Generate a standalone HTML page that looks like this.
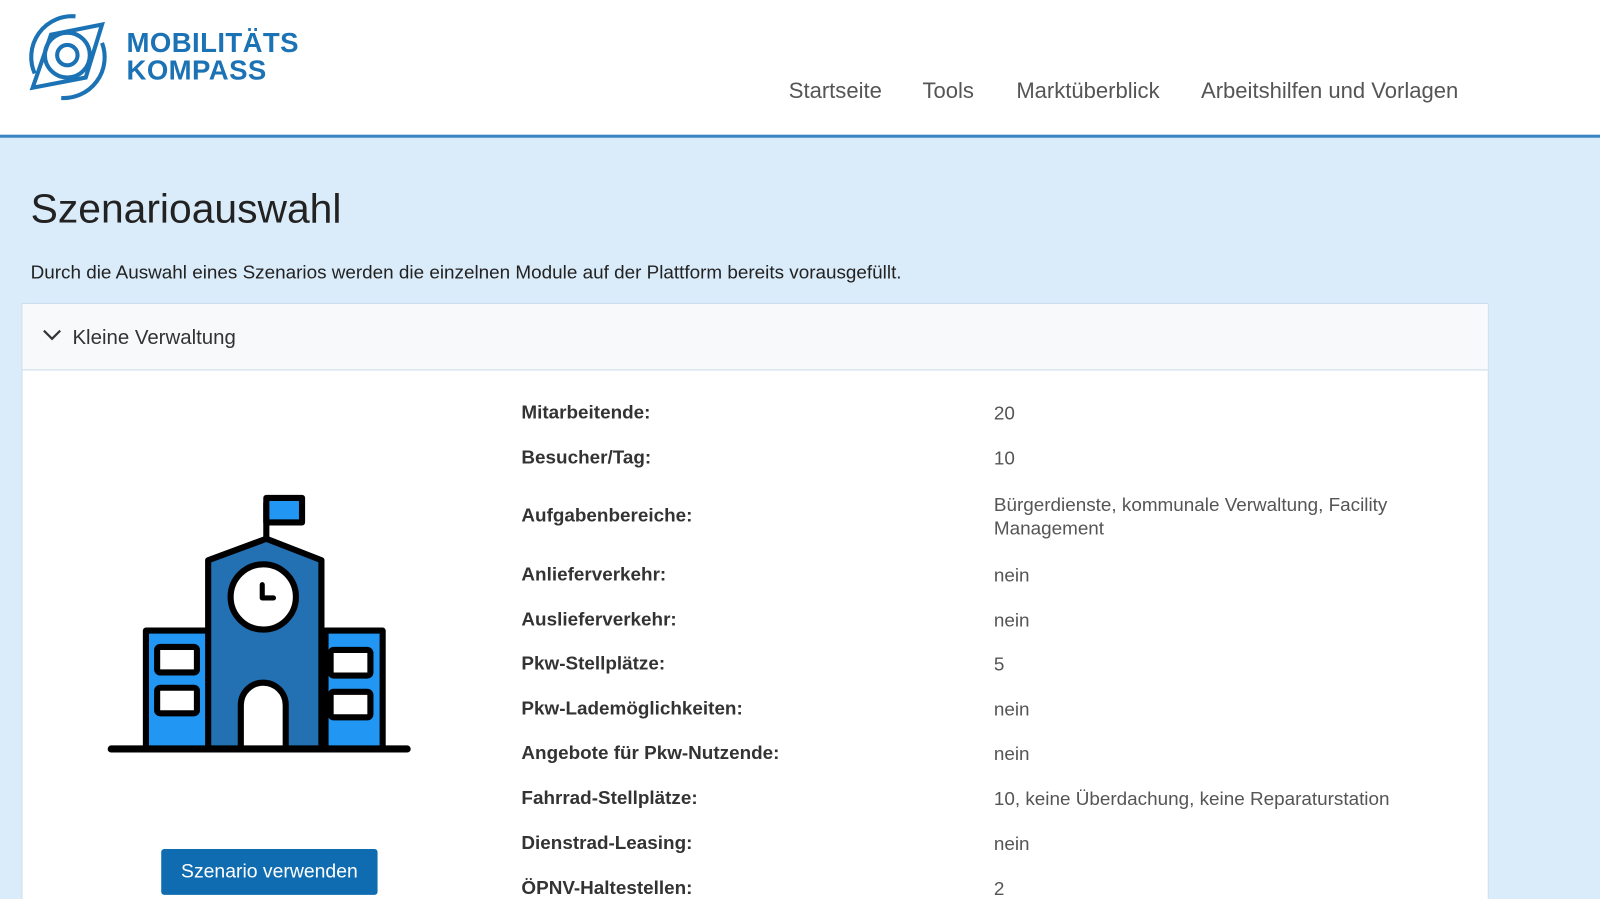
<!DOCTYPE html>
<html style="width:1600px;height:899px;overflow:hidden"><head><meta charset="utf-8"><style>
*{margin:0;padding:0;box-sizing:border-box}
body{width:1600px;height:899px;overflow:hidden;background:#daebf9;font-family:"Liberation Sans",sans-serif;position:relative}
#w{position:absolute;left:0;top:0;width:1568px;height:881px;overflow:hidden;transform:scale(1.0204);transform-origin:0 0}
.hdr{position:absolute;left:0;top:0;width:1568px;height:135px;background:#fff;border-bottom:3px solid #3a84c4}
.logo{position:absolute;left:24px;top:12px}
.lt{position:absolute;left:124px;top:29px;color:#1b72b4;font-size:27px;font-weight:bold;line-height:27px;letter-spacing:0.4px}
.nav{position:absolute;top:76px;font-size:21.6px;color:#555}
h1{position:absolute;left:30px;top:183px;font-size:40px;font-weight:normal;color:#222}
.intro{position:absolute;left:30px;top:256px;font-size:18.5px;color:#222}
.card{position:absolute;left:21px;top:297px;width:1438px;height:600px;background:#fff;border:1px solid #c9dcec}
.ch{height:65px;background:#f7f9fb;border-bottom:1px solid #c9dcec;position:relative}
.ch span{position:absolute;left:49px;top:22px;font-size:20px;color:#333}
.l{position:absolute;left:489px;color:#333;font-weight:bold;font-size:18.5px}
.v{position:absolute;left:952px;color:#555;font-size:18.5px;line-height:23px}
.btn{position:absolute;left:136px;top:534px;width:212px;height:45px;background:#0f6cb0;border-radius:3px;color:#fff;font-size:19px;text-align:center;line-height:45px}
</style></head><body><div id="w">
<div class="hdr">
<svg class="logo" width="90" height="88" viewBox="0 0 90 88" fill="none" stroke="#1b72b4" stroke-width="4">
<path d="M10 60 A40 40 0 0 1 50 4"/><path d="M76 30 A40 40 0 0 1 36 84"/>
<path d="M8 74 L26 22 L76 12 L60 64 Z"/>
<circle cx="42" cy="42" r="22"/><circle cx="42" cy="42" r="10"/>
</svg>
<div class="lt">MOBILITÄTS<br>KOMPASS</div>
<div class="nav" style="left:773px">Startseite</div>
<div class="nav" style="left:904px">Tools</div>
<div class="nav" style="left:996px">Marktüberblick</div>
<div class="nav" style="left:1177px">Arbeitshilfen und Vorlagen</div>
</div>
<h1>Szenarioauswahl</h1>
<div class="intro">Durch die Auswahl eines Szenarios werden die einzelnen Module auf der Plattform bereits vorausgefüllt.</div>
<div class="card">
<div class="ch"><svg style="position:absolute;left:20px;top:25px" width="18" height="12" viewBox="0 0 18 12"><path d="M1 1 L9 9 L17 1" fill="none" stroke="#333" stroke-width="2.2"/></svg><span>Kleine Verwaltung</span></div>
<svg style="position:absolute;left:-21px;top:-297px" width="420" height="760" viewBox="0 0 420 760">
<g stroke="#000" stroke-width="6" stroke-linejoin="round" stroke-linecap="round">
<path d="M260 492 V540" fill="none"/>
<path d="M260 487 H295 V511 H260 Z" fill="#2196f3"/>
<rect x="142" y="617" width="63" height="116" fill="#2196f3"/>
<rect x="318" y="617" width="56" height="116" fill="#2196f3"/>
<path d="M203 733 V548 L260 527 L314 548 V733 Z" fill="#2370b3"/>
<circle cx="257" cy="584" r="32" fill="#fff"/>
<path d="M256 572 V585 H267" fill="none" stroke-width="5"/>
<path d="M235 733 V690 A22 22 0 0 1 279 690 V733 Z" fill="#fff"/>
<rect x="153" y="633" width="39" height="25" rx="3" fill="#fff"/>
<rect x="153" y="673" width="39" height="25" rx="3" fill="#fff"/>
<rect x="323" y="636" width="39" height="25" rx="3" fill="#fff"/>
<rect x="323" y="677" width="39" height="25" rx="3" fill="#fff"/>
<path d="M108 733 H398" fill="none" stroke-width="7"/>
</g></svg>
<div class="btn">Szenario verwenden</div>
<div class="l" style="top:95px">Mitarbeitende:</div><div class="v" style="top:95px">20</div>
<div class="l" style="top:139px">Besucher/Tag:</div><div class="v" style="top:139px">10</div>
<div class="l" style="top:196px">Aufgabenbereiche:</div><div class="v" style="top:185px">Bürgerdienste, kommunale Verwaltung, Facility<br>Management</div>
<div class="l" style="top:254px">Anlieferverkehr:</div><div class="v" style="top:254px">nein</div>
<div class="l" style="top:298px">Auslieferverkehr:</div><div class="v" style="top:298px">nein</div>
<div class="l" style="top:341px">Pkw-Stellplätze:</div><div class="v" style="top:341px">5</div>
<div class="l" style="top:385px">Pkw-Lademöglichkeiten:</div><div class="v" style="top:385px">nein</div>
<div class="l" style="top:429px">Angebote für Pkw-Nutzende:</div><div class="v" style="top:429px">nein</div>
<div class="l" style="top:473px">Fahrrad-Stellplätze:</div><div class="v" style="top:473px">10, keine Überdachung, keine Reparaturstation</div>
<div class="l" style="top:517px">Dienstrad-Leasing:</div><div class="v" style="top:517px">nein</div>
<div class="l" style="top:561px">ÖPNV-Haltestellen:</div><div class="v" style="top:561px">2</div>
</div>
</div></body></html>
